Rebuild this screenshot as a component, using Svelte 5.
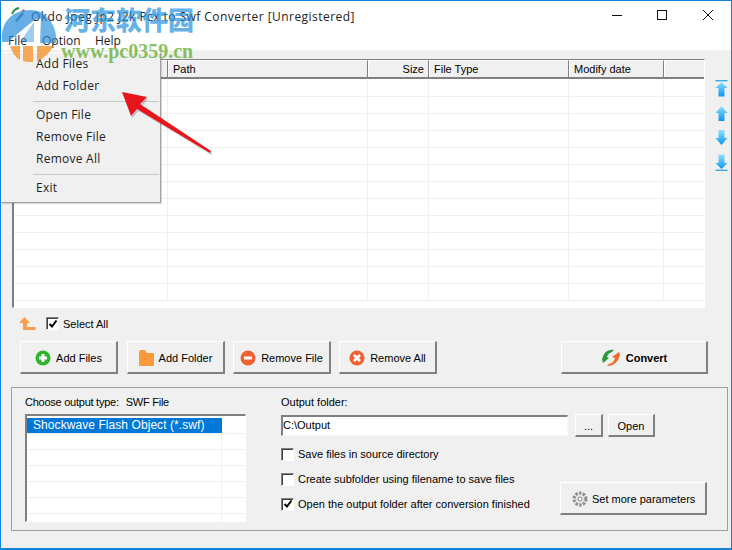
<script>
  const cols = [
    { label: '', w: 154 },
    { label: 'Path', w: 200 },
    { label: 'Size', w: 61, right: true },
    { label: 'File Type', w: 140 },
    { label: 'Modify date', w: 95 },
    { label: '', w: 41 }
  ];
  const rows = Array.from({ length: 13 });
  const listRows = Array.from({ length: 6 });
  const options = [
    { label: 'Save files in source directory', on: false },
    { label: 'Create subfolder using filename to save files', on: false },
    { label: 'Open the output folder after conversion finished', on: true }
  ];
</script>

{#snippet check(on)}
  <span class="check">
    {#if on}
      <svg width="10" height="10" viewBox="0 0 10 10"><path d="M1.5 5 L4 7.5 L8.5 1.5" fill="none" stroke="#000" stroke-width="2"/></svg>
    {/if}
  </span>
{/snippet}

<div class="window">
  <header class="titlebar">
    <svg class="appicon" width="16" height="16" viewBox="0 0 16 16">
      <path d="M2 7 Q4 2 9 1" fill="none" stroke="#2c8a4a" stroke-width="2"/>
      <path d="M5 14 L12 5 L14 7 L7 15 Z" fill="#6d7480"/>
      <path d="M11 4 L14 2 L15 5 Z" fill="#c8503c"/>
    </svg>
    <span class="title">Okdo Jpeg Jp2 J2k Pcx to Swf Converter [Unregistered]</span>
    <div class="controls">
      <svg width="101" height="12" viewBox="0 0 101 12">
        <path d="M0 6.5 H10" stroke="#111" fill="none"/>
        <rect x="45.5" y="1.5" width="9" height="9" stroke="#111" fill="none"/>
        <path d="M91 1 L101 11 M101 1 L91 11" stroke="#111" fill="none"/>
      </svg>
    </div>
  </header>

  <nav class="menubar">
    <span class="m1">File</span><span class="m2">Option</span><span class="m3">Help</span>
  </nav>

  <main class="body">
    <section class="tablerow">
      <div class="table">
        <div class="thead">
          {#each cols as c}
            <div class="th" class:right={c.right} style="width:{c.w}px">{c.label}</div>
          {/each}
        </div>
        {#each rows as _}
          <div class="tr">
            {#each cols as c}
              <div class="td" style="width:{c.w}px"></div>
            {/each}
          </div>
        {/each}
      </div>
      <div class="movers">
        <svg width="13" height="17" viewBox="0 0 13 17"><defs><linearGradient id="au" x1="0" y1="0" x2="0" y2="1"><stop offset="0" stop-color="#8fe0ff"/><stop offset="1" stop-color="#0a96ee"/></linearGradient></defs><path d="M0.5 0.7 H12.5" stroke="#3aa8ea" stroke-width="1.4"/><path d="M6.5 2 L12.5 8 H9.5 V16.5 H3.5 V8 H0.5 Z" fill="url(#au)"/></svg>
        <svg width="13" height="15" viewBox="0 0 13 15"><path d="M6.5 0 L12.5 7 H9.5 V15 H3.5 V7 H0.5 Z" fill="url(#au)"/></svg>
        <svg width="13" height="15" viewBox="0 0 13 15"><path d="M6.5 15 L12.5 8 H9.5 V0 H3.5 V8 H0.5 Z" fill="url(#au)"/></svg>
        <svg width="13" height="17" viewBox="0 0 13 17"><path d="M0.5 16.3 H12.5" stroke="#3aa8ea" stroke-width="1.4"/><path d="M6.5 15 L12.5 9 H9.5 V0.5 H3.5 V9 H0.5 Z" fill="url(#au)"/></svg>
      </div>
    </section>

    <div class="selectrow">
      <svg width="17" height="13" viewBox="0 0 17 13"><path d="M5.5 0 L11 6 H8 V10 H16.5 V13 H4 V6 H0 Z" fill="#fb9d4b"/></svg>
      <label class="chk">{@render check(true)}<span>Select All</span></label>
    </div>

    <div class="actions">
      <button class="btn">
        <svg width="16" height="16" viewBox="0 0 16 16"><circle cx="8" cy="8" r="7.5" fill="#2cb52c"/><path d="M8 4 V12 M4 8 H12" stroke="#fff" stroke-width="3"/></svg>
        Add Files
      </button>
      <button class="btn">
        <svg width="15" height="16" viewBox="0 0 15 16"><path d="M0 2 Q0 0 2 0 H6 L8 3 H14 Q15 3 15 4 V15 Q15 16 14 16 H1 Q0 16 0 15 Z" fill="#fb9a3c"/></svg>
        Add Folder
      </button>
      <button class="btn">
        <svg width="16" height="16" viewBox="0 0 16 16"><circle cx="8" cy="8" r="7.5" fill="#ef6033"/><path d="M4 8 H12" stroke="#fff" stroke-width="3"/></svg>
        Remove File
      </button>
      <button class="btn">
        <svg width="16" height="16" viewBox="0 0 16 16"><circle cx="8" cy="8" r="7.5" fill="#ef6033"/><path d="M5 5 L11 11 M11 5 L5 11" stroke="#fff" stroke-width="2.6"/></svg>
        Remove All
      </button>
      <button class="btn convert">
        <svg width="20" height="18" viewBox="0 0 20 18">
          <path d="M1 10 L3 5 Q7 0 13 1 L11 3 Q7 4 6 8 L8 9 L2 14 Z" fill="#2a9a3a"/>
          <path d="M19 6 L17 11 Q13 17 6 17 L8 15 Q13 14 14 9 L11 8 L18 3 Z" fill="#ef6a2a"/>
        </svg>
        Convert
      </button>
    </div>

    <section class="group">
      <div class="typecol">
        <div class="typelabel"><span>Choose output type:</span><span>SWF File</span></div>
        <div class="list">
          <div class="li sel"><div class="lic">Shockwave Flash Object (*.swf)</div><div class="lie"></div></div>
          {#each listRows as _}
            <div class="li"><div class="lic"></div><div class="lie"></div></div>
          {/each}
        </div>
      </div>
      <div class="outcol">
        <div class="outlabel">Output folder:</div>
        <div class="pathrow">
          <div class="input">C:\Output</div>
          <button class="btn small dots">...</button>
          <button class="btn small open">Open</button>
        </div>
        <div class="lower">
          <div class="opts">
            {#each options as o}
              <label class="chk">{@render check(o.on)}<span>{o.label}</span></label>
            {/each}
          </div>
          <button class="btn params">
            <svg width="18" height="18" viewBox="0 0 18 18">
              <circle cx="9" cy="9" r="6" fill="#e4e4e4" stroke="#8a8a8a" stroke-width="3" stroke-dasharray="2.4 1.4"/>
              <circle cx="9" cy="9" r="2" fill="#fff" stroke="#888"/>
            </svg>
            Set more parameters
          </button>
        </div>
      </div>
    </section>
  </main>

  <!-- open File menu -->
  <div class="menu">
    <div class="item">Add Files</div>
    <div class="item">Add Folder</div>
    <div class="sep"></div>
    <div class="item">Open File</div>
    <div class="item">Remove File</div>
    <div class="item">Remove All</div>
    <div class="sep"></div>
    <div class="item">Exit</div>
  </div>

  <!-- annotation arrow -->
  <svg class="arrow" width="110" height="80" viewBox="0 0 110 80">
    <path d="M1 1 L26 6 L19 13 L90 60 L89 62 L16 18 L10 25 Z" fill="#00000030" transform="translate(1.5 2)"/>
    <path d="M1 1 L26 6 L19 13 L90 60 L89 62 L16 18 L10 25 Z" fill="#e8141c"/>
  </svg>

  <!-- site watermark -->
  <div class="wm">
    <svg class="wmlogo" width="60" height="64" viewBox="0 0 60 64">
      <path d="M2 42 C0 25 10 10 30 10 C38 10 44 13 47 17 L34 20 L8 42 Z" fill="#2c8fdc" opacity=".72"/>
      <path d="M34 22 L34 42 L20 42 Z" fill="#2c8fdc" opacity=".45"/>
      <path d="M41 18 L47 17 C54 24 57 33 56 43 L40 43 Z" fill="#2c8fdc" opacity=".68"/>
      <path d="M10 46 L20 46 L20 60 C15 57 12 52 10 46 Z" fill="#f59a3a" opacity=".85"/>
      <path d="M23 46 L33 46 L33 62 C29 62 26 62 23 61 Z" fill="#f59a3a" opacity=".85"/>
      <path d="M37 46 L53 46 C50 53 44 58 37 61 Z" fill="#f59a3a" opacity=".85"/>
    </svg>
    <span class="wmcn">河东软件园</span>
    <span class="wmurl">www.pc0359.cn</span>
  </div>
</div>

<style>
  :global(body) { margin: 0; }
  .window {
    position: relative;
    width: 732px;
    height: 550px;
    box-sizing: border-box;
    border: 1px solid #1583d4;
    border-bottom-width: 2px;
    background: #fff;
    display: flex;
    flex-direction: column;
    overflow: hidden;
    font-family: "Liberation Sans", Arial, sans-serif;
    font-size: 11px;
    color: #000;
  }
  .titlebar {
    height: 29px;
    display: flex;
    align-items: center;
    padding: 0 0 0 9px;
    flex: none;
  }
  .appicon { margin-right: 5px; margin-top: -1px; }
  .title {
    font-family: "Open Sans", sans-serif;
    font-size: 12px;
    letter-spacing: .45px;
    color: #222;
    margin-top: 1px;
  }
  .controls { margin-left: auto; margin-right: 18px; height: 12px; margin-top: -1px; }
  .controls svg { display: block; }
  .menubar {
    height: 19px;
    flex: none;
    display: flex;
    align-items: center;
    font-family: "Open Sans", sans-serif;
    font-size: 12px;
    color: #222;
    padding-left: 7px;
    margin-top: 1px;
  }
  .m1 { width: 34px; }
  .m2 { width: 53px; }
  .body {
    flex: 1;
    background: #f0f0f0;
    padding: 9px 3px 0 10px;
    display: flex;
    flex-direction: column;
    min-height: 0;
  }
  .tablerow { display: flex; flex: none; }
  .table {
    flex: none;
    width: 693px;
    height: 249px;
    box-sizing: border-box;
    background: #fff;
    overflow: hidden;
    border-left: 2px solid #808080;
    border-top: 1px solid #808080;
    border-right: 1px solid #fff;
    border-bottom: 1px solid #fff;
    margin-left: 1px;
  }
  .thead { display: flex; height: 19px; box-sizing: border-box; border-bottom: 2px solid #808080; margin-bottom: 1px; }
  .th {
    flex: none;
    box-sizing: border-box;
    height: 17px;
    background: #f0f0f0;
    border-left: 1px solid #fff;
    border-top: 1px solid #fff;
    border-right: 1px solid #808080;
    line-height: 16px;
    padding: 0 4px;
    white-space: nowrap;
  }
  .th.right { text-align: right; }
  .tr { display: flex; height: 17px; box-sizing: border-box; border-bottom: 1px solid #f0f0f0; }
  .td { flex: none; box-sizing: border-box; border-right: 1px solid #f0f0f0; }
  .movers {
    margin-left: 10px;
    margin-top: 21px;
    display: flex;
    flex-direction: column;
    gap: 9px;
    align-items: center;
    width: 13px;
    flex: none;
  }
  .movers svg { display: block; flex: none; }
  .selectrow {
    display: flex;
    align-items: center;
    height: 17px;
    margin-top: 7px;
    padding-left: 8px;
    gap: 10px;
  }
  .chk { display: flex; align-items: center; gap: 4px; white-space: nowrap; }
  .check {
    width: 11px;
    height: 11px;
    flex: none;
    background: #fff;
    border: 1px solid #808080;
    border-right-color: #fff;
    border-bottom-color: #fff;
    box-sizing: content-box;
    display: flex;
    align-items: center;
    justify-content: center;
    box-shadow: inset 1px 1px 0 #404040;
  }
  .check svg { display: block; }
  .actions {
    display: flex;
    margin-top: 9px;
    padding-left: 9px;
    gap: 8px;
  }
  .btn {
    appearance: none;
    font: inherit;
    color: #000;
    background: #f0f0f0;
    box-sizing: border-box;
    border: 1px solid #fff;
    border-right: 2px solid #808080;
    border-bottom: 2px solid #808080;
    border-radius: 0;
    padding: 1px 0 0;
    display: flex;
    align-items: center;
    justify-content: center;
    gap: 5px;
    white-space: nowrap;
  }
  .actions .btn { width: 98px; height: 33px; }
  .actions .btn:first-child { margin-right: 1px; }
  .actions .btn.convert {
    width: 147px;
    margin-left: 116px;
    font-weight: 700;
    gap: 5px;
  }
  .group {
    margin-top: 13px;
    width: 717px;
    height: 144px;
    box-sizing: border-box;
    border: 1px solid #a0a0a0;
    display: flex;
    padding: 6px 0 0 13px;
  }
  .typecol { width: 221px; flex: none; }
  .typelabel { display: flex; gap: 7px; height: 15px; align-items: center; letter-spacing: -.25px; }
  .list {
    margin-top: 5px;
    height: 108px;
    box-sizing: border-box;
    background: #fff;
    border-left: 2px solid #808080;
    border-top: 2px solid #808080;
    border-right: 1px solid #fff;
    border-bottom: 1px solid #fff;
    padding-top: 2px;
    overflow: hidden;
  }
  .li { display: flex; height: 16px; box-sizing: border-box; border-bottom: 1px solid #f0f0f0; }
  .lic { width: 195px; flex: none; box-sizing: border-box; border-right: 1px solid #f0f0f0; padding-left: 6px; line-height: 15px; font-size: 12px; letter-spacing: .07px; white-space: nowrap; }
  .sel .lic { background: #0078d7; color: #fff; border-right-color: #0078d7; }
  .lie { flex: 1; }
  .outcol { margin-left: 35px; flex: 1; min-width: 0; padding-right: 20px; }
  .outlabel { height: 15px; line-height: 15px; margin-top: 1px; }
  .pathrow { display: flex; align-items: center; margin-top: 4px; height: 23px; }
  .input {
    width: 287px;
    height: 21px;
    box-sizing: border-box;
    background: #fff;
    border-left: 2px solid #808080;
    border-top: 2px solid #808080;
    border-right: 1px solid #f8f8f8;
    border-bottom: 1px solid #f8f8f8;
    line-height: 17px;
    padding-left: 0;
  }
  .btn.small { height: 23px; }
  .dots { width: 28px; margin-left: 7px; }
  .open { width: 47px; margin-left: 5px; }
  .lower { display: flex; margin-top: 10px; }
  .opts { display: flex; flex-direction: column; gap: 11px; width: 280px; }
  .opts .chk { height: 14px; gap: 4px; }
  .params {
    margin-top: 35px;
    width: 147px;
    height: 33px;
    gap: 3px;
  }
  .menu {
    position: absolute;
    left: 0;
    top: 51px;
    width: 160px;
    height: 151px;
    box-sizing: border-box;
    background: #f0f0f0;
    border: 1px solid #fff;
    border-right: 1px solid #a0a0a0;
    border-bottom: 1px solid #a0a0a0;
    font-family: "Open Sans", sans-serif;
    font-size: 12px;
    color: #222;
    box-shadow: 1px 1px 1px #00000022;
  }
  .item { height: 22px; line-height: 22px; padding-left: 34px; letter-spacing: .25px; }
  .sep { height: 1px; background: #c8c8c8; margin: 4px 1px 2px 31px; }
  .arrow { position: absolute; left: 120px; top: 90px; overflow: visible; }
  .wm { position: absolute; left: 0; top: 0; width: 220px; height: 64px; pointer-events: none; }
  .wmlogo { position: absolute; left: -1px; top: -1px; }
  .wmcn {
    position: absolute;
    left: 63px;
    top: 0;
    font-family: "Noto Sans CJK SC", sans-serif;
    font-weight: 900;
    font-size: 26px;
    line-height: 36px;
    color: #2b95e0;
    opacity: .72;
    white-space: nowrap;
  }
  .wmurl {
    position: absolute;
    left: 60px;
    top: 40px;
    font-family: "Liberation Serif", serif;
    font-weight: 700;
    font-size: 20px;
    line-height: 20px;
    color: #6fb43c;
    opacity: .82;
    white-space: nowrap;
  }
</style>
